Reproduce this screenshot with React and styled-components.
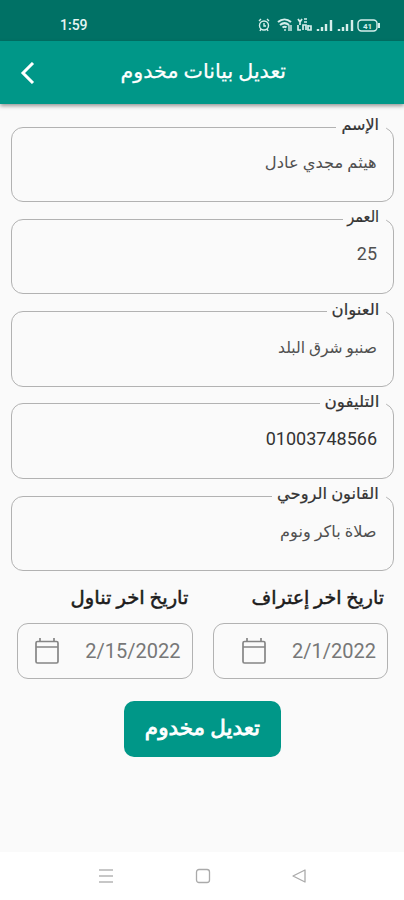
import React from 'react'
import styled, { createGlobalStyle } from "styled-components";


const GlobalStyle = createGlobalStyle`
    * {
        box-sizing: border-box;
    }

    body {
        margin: 0;
        background-color: #fafafa;
        font-family: Roboto, "DejaVu Sans", sans-serif;
    }
`;

const Screen = styled.div`
    width: 404px;
    height: 900px;
    display: flex;
    flex-direction: column;
    overflow: hidden;
    background-color: #fafafa;
`;

const StatusBar = styled.div`
    height: 41px;
    flex: none;
    display: flex;
    justify-content: space-between;
    align-items: center;
    padding: 9px 22px 0 60px;
    background-color: #007165;
    color: #e6f5f3;
    font-size: 14px;
    font-weight: 500;
`;

const AppBar = styled.header`
    height: 63px;
    flex: none;
    display: grid;
    grid-template-columns: 56px 1fr 54px;
    align-items: center;
    background-color: #009788;
    box-shadow: 0 2px 4px rgba(0, 0, 0, 0.4);
    color: #fff;

    svg {
        margin-left: 19px;
    }
`;

const Label = styled.span`
    display: inline-block;
    direction: rtl;
    white-space: nowrap;
    line-height: 24px;
    font-size: ${({ $size }) => $size || 16}px;
    -webkit-text-stroke: ${({ $heavy }) => $heavy || 0}px currentColor;
    transform: scaleX(${({ $stretch }) => $stretch || 1});
    transform-origin: ${({ $origin }) => $origin || "right"};
`;

const Title = styled.h1`
    margin: 0;
    padding-bottom: 2px;
    font-size: 16px;
    font-weight: 400;
    text-align: center;
    line-height: 24px;
`;

const Form = styled.main`
    flex: 1;
    direction: rtl;
    padding: 11px 10px 0 11px;
`;

const Field = styled.fieldset`
    height: 87px;
    margin: 0 0 5.25px;
    padding: 11px 16px 0;
    border: 1px solid #b2b2b2;
    border-radius: 12px;
    color: ${({ $dark }) => $dark ? "#333" : "#505050"};
    font-size: 17.5px;
    line-height: 24px;
`;

const Legend = styled.legend`
    width: ${({ $width }) => $width}px;
    height: 24px;
    margin-right: -9px;
    padding: 0 7px;
    color: #333;
    line-height: 19px;

    ${Label} {
        line-height: 19px;
    }
`;

const Dates = styled.div`
    display: flex;
    justify-content: space-between;
    padding: 10px 6px 0;
`;

const DateColumn = styled.div`
    width: 175.5px;
`;

const DateTitle = styled.div`
    height: 37px;
    padding-right: 4px;
    color: #1c1c1c;
`;

const DateBox = styled.div`
    height: 56px;
    display: flex;
    align-items: center;
    justify-content: space-between;
    padding: 0 11px 0 ${({ $inset }) => $inset}px;
    border: 1px solid #b2b2b2;
    border-radius: 11px;
    color: #777;
    font-size: 20px;
`;

const Submit = styled.button`
    width: 157px;
    height: 56px;
    display: flex;
    align-items: center;
    justify-content: center;
    margin: 22px auto 0;
    padding: 0 0 3px;
    border: 0;
    border-radius: 10px;
    background-color: #009788;
    color: #fff;
    font-family: inherit;
`;

const NavigationBar = styled.nav`
    height: 48px;
    flex: none;
    display: flex;
    justify-content: space-between;
    align-items: center;
    padding: 0 97px 0 98px;
    background-color: #fff;
`;

const StatusIcons = () => (
    <svg width="124" height="16" viewBox="0 0 124 16" fill="none" stroke="#d5eeeb" strokeWidth="1.4">
        <circle cx="6" cy="8.5" r="4.5" />
        <path d="M1 4l2-2M11 4L9 2M6 6v3h2M3 12l-1 2M9 12l1 2" />
        <path d="M20 5c4-3.500 9-3.500 13 0M22 8c3-2.500 6-2.500 9 0M24.500 10.500c1.500-1 3-1 4 0" strokeWidth="2" />
        <path d="M27 12v2M31 8v6M33 8v6" />
        <path d="M40 2l2 3 2-3M42 5v3M46 2h3M46 5h3M40 8v5h3M45 13V8h3v5M50 8v5h3V9h-3" strokeWidth="1.7" />
        <path d="M60 12v2M64 10v4M68 7v7M73 3v11M81 12v2M85 10v4M89 7v7M94 3v11" strokeWidth="2.4" />
        <rect x="100" y="3" width="19" height="11" rx="3.500" />
        <path d="M121 6v5" strokeWidth="2" />
        <text x="109.500" y="11.500" textAnchor="middle" fill="#d5eeeb" stroke="none" fontSize="8" fontWeight="700">41</text>
    </svg>
)

const CalendarIcon = () => (
    <svg width="24" height="26" viewBox="0 0 24 26" fill="none" stroke="#858585" strokeWidth="1.700">
        <rect x="1" y="3.500" width="22" height="21.500" rx="1.500" />
        <path d="M1 9h22M5 0v4M19 0v4" />
    </svg>
)

const fields = [
    { label: "الإسم", value: "هيثم مجدي عادل", gap: 50, stretch: 1.0, valueStretch: 1.02 },
    { label: "العمر", value: "25", gap: 43, stretch: 0.91 },
    { label: "العنوان", value: "صنبو شرق البلد", gap: 59, stretch: 1.03, valueStretch: 0.97 },
    { label: "التليفون", value: "01003748566", gap: 66, stretch: 1.05, dark: true },
    { label: "القانون الروحي", value: "صلاة باكر ونوم", gap: 114, stretch: 1.02, valueStretch: 1.01 },
];

const dates = [
    { label: "تاريخ اخر إعتراف", value: "2/1/2022", inset: 28 },
    { label: "تاريخ اخر تناول", value: "2/15/2022", inset: 17, stretch: 1.03 },
];

function App() {
    return (
        <Screen>
            <GlobalStyle />
            <StatusBar>
                <span>1:59</span>
                <StatusIcons />
            </StatusBar>
            <AppBar>
                <svg width="16" height="22" viewBox="0 0 16 22" fill="none" stroke="#fff" strokeWidth="3">
                    <path d="M14 1L4 11l10 10" />
                </svg>
                <Title><Label $size={20} $stretch={1.03} $heavy={0.25} $origin="center">تعديل بيانات مخدوم</Label></Title>
            </AppBar>
            <Form>
                {fields.map(({ label, value, gap, stretch, valueStretch, dark }) => (
                    <Field key={label} $dark={dark}>
                        <Legend $width={gap}>
                            <Label $stretch={stretch} $heavy={0.2}>{label}</Label>
                        </Legend>
                        <Label $size={/\d/.test(value) ? 18 : 16} $stretch={valueStretch}>{value}</Label>
                    </Field>
                ))}
                <Dates>
                    {dates.map(({ label, value, inset, stretch }) => (
                        <DateColumn key={label}>
                            <DateTitle><Label $size={19} $stretch={stretch} $heavy={0.5}>{label}</Label></DateTitle>
                            <DateBox $inset={inset}>
                                <span>{value}</span>
                                <CalendarIcon />
                            </DateBox>
                        </DateColumn>
                    ))}
                </Dates>
                <Submit><Label $size={21} $heavy={0.8} $stretch={1.02} $origin="center">تعديل مخدوم</Label></Submit>
            </Form>
            <NavigationBar>
                <svg width="16" height="16" stroke="#b5b5b5" strokeWidth="1.500">
                    <path d="M1 2h14M1 8h14M1 14h14" />
                </svg>
                <svg width="16" height="16" fill="none" stroke="#aaa" strokeWidth="1.300">
                    <rect x="1.500" y="1.500" width="13" height="13" rx="2.500" />
                </svg>
                <svg width="16" height="16" fill="none" stroke="#aaa" strokeWidth="1.300" strokeLinejoin="round">
                    <path d="M14 2v12L2 8z" />
                </svg>
            </NavigationBar>
        </Screen>
    )
}

export default App;
